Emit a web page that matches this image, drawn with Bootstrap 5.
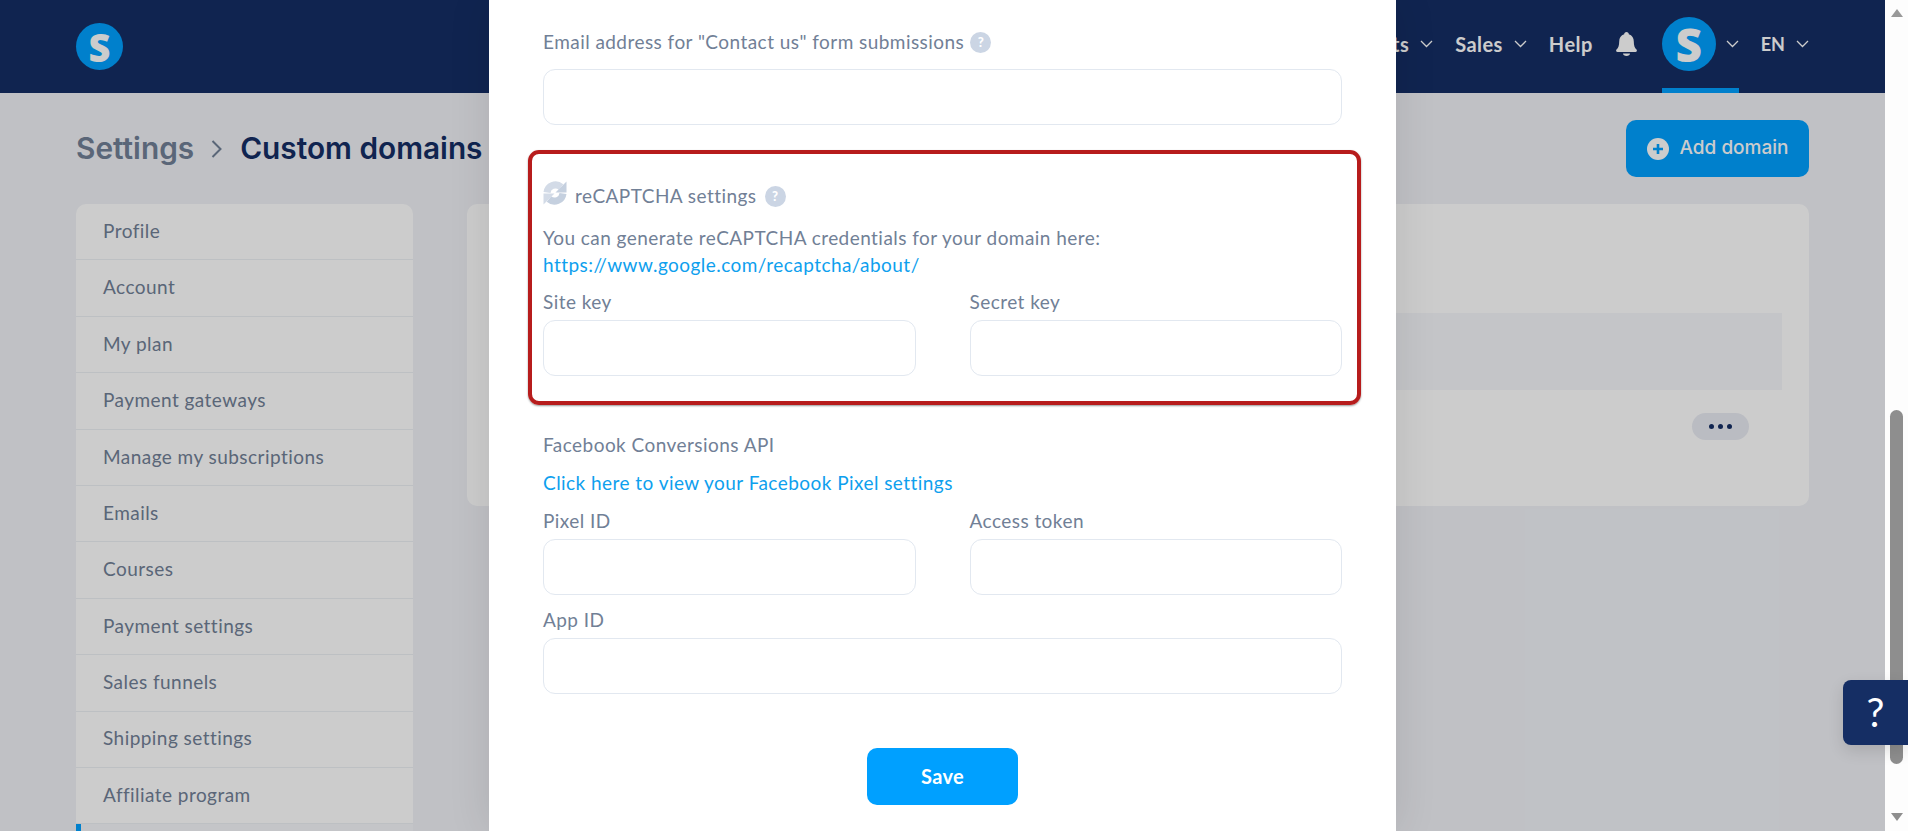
<!DOCTYPE html>
<html lang="en">
<head>
  <meta charset="UTF-8" />
  <meta name="viewport" content="width=device-width, initial-scale=1" />
  <title>Custom domains</title>
  <link href="https://cdn.jsdelivr.net/npm/bootstrap@5.3.3/dist/css/bootstrap.min.css" rel="stylesheet" />
  <style>
    html, body { height: 831px; overflow: hidden; }
    body { font-family: "Lato", sans-serif; font-size: 19px; letter-spacing: .45px; color: #718096; background: #fdfdfd; }
    .app-shell { height: 831px; }
    .app-main { position: relative; flex: 1 1 auto; min-width: 0; overflow: hidden; background: #f0f2f7; }

    /* top bar */
    .top-bar { height: 93px; padding: 0 76px; background: #152e64; color: #fff; font-weight: 700; font-size: 20px; }
    .logo-dot { width: 47px; height: 47px; font-size: 38px; }
    .round-s { border-radius: 50%; background: #00a0ff; color: #fff; font-family: "Open Sans", sans-serif; font-weight: 800; line-height: 1; letter-spacing: 0; }
    .top-link { color: #fff; text-decoration: none; display: flex; align-items: center; gap: 11px; }
    .lang-link { font-size: 18px; letter-spacing: 0; }
    .top-menu { gap: 22px; height: 93px; padding-bottom: 5px; }
    .avatar-wrap { position: relative; align-self: flex-start; height: 93px; width: 77px; padding-bottom: 5px; display: flex; align-items: center; gap: 10px; margin-left: 2px; }
    .avatar-wrap::after { content: ""; position: absolute; left: 0; right: 0; bottom: 0; height: 5px; background: #00a0ff; }
    .avatar-dot { width: 54px; height: 54px; font-size: 46px; flex: none; }
    .chev { width: 13px; height: 8px; flex: none; }

    /* page under the modal */
    .page-head { padding: 27px 76px 0 76px; height: 111px; }
    .crumbs { font-family: "Inter", sans-serif; font-weight: 600; font-size: 29.800px; letter-spacing: 0; margin: 0; padding-top: 11px; gap: 17px; color: #718096; }
    .crumbs b { color: #152e64; font-weight: 600; }
    .add-btn { width: 183px; height: 57px; border: 0; border-radius: 10px; background: #00a0ff; color: #fff; font-family: "Inter", sans-serif; font-weight: 500; font-size: 19px; letter-spacing: 0; gap: 11px; }
    .page-body { padding: 0 76px; gap: 54px; }
    .side-list { width: 337px; flex: none; border-radius: 10px; overflow: hidden; }
    .side-list .list-group-item { height: 56.4px; padding: 0 0 1px 27px; display: flex; align-items: center; background: #fff; border: 0; border-bottom: 1px solid #edf0f4; color: #718096; border-radius: 0; margin: 0; }
    .side-list .list-group-item.is-current { background: #f6f7fa; box-shadow: inset 5px 0 0 #00a0ff; }
    .domain-panel { flex: 1 1 auto; height: 302px; background: #fff; border-radius: 10px; padding: 109px 27px 0 27px; }
    .head-strip { height: 77px; background: #f6f7fa; }
    .dots-btn { width: 57px; height: 27px; margin: 23px 33px 0 auto; border: 0; border-radius: 14px; background: #e9ecf3; gap: 4px; }
    .dots-btn i { width: 5px; height: 5px; border-radius: 50%; background: #152e64; display: block; }

    .dim-layer { position: absolute; inset: 0; background: rgba(0, 0, 0, .2); }

    /* modal */
    .form-modal { position: absolute; top: 0; bottom: 0; left: 489px; width: 907px; padding: 30px 54px 0; background: #fff; box-shadow: 0 0 40px rgba(0, 0, 0, .1); overflow: hidden; }
    .form-modal label, .modal-line { display: block; line-height: 24px; margin: 0; }
    .modal-line.with-tip { display: flex; align-items: center; gap: 6px; }
    .tip-dot { width: 21px; height: 21px; border-radius: 50%; background: #cbd5e4; color: #fff; font-size: 13px; font-weight: 900; line-height: 21px; letter-spacing: 0; text-align: center; flex: none; }
    .form-modal .form-control { height: 56px; border: 1px solid #e2e8f0; border-radius: 12px; margin-top: 6px; box-shadow: none; }
    .form-modal .first-field { margin-top: 15px; }
    .key-row { --bs-gutter-x: 54px; }
    .red-box { margin: 25px -19px 0 -15px; padding: 27px 15px 25px 11px; border: 4px solid #b71c1c; border-radius: 11px; box-shadow: 0 1px 2px rgba(0, 0, 0, .4); }
    .captcha-head { height: 30px; gap: 8px; margin-bottom: 13px; }
    .captcha-icon { align-self: flex-start; flex: none; }
    .captcha-text { line-height: 27px; margin: 0; }
    .form-modal a { color: #0ea0ee; text-decoration: none; }
    .gap-a { margin-top: 12px; }
    .form-modal .gap-b { margin-top: 28px; }
    .fb-link { line-height: 26px; margin-top: 13px; display: block; }
    .gap-c { margin-top: 13px; }
    .form-modal .gap-d { margin-top: 13px; }
    .save-btn { display: block; width: 151px; height: 57px; margin: 54px auto 0; padding-bottom: 3px; border: 0; border-radius: 10px; background: #00a0ff; color: #fff; font-weight: 700; font-size: 20px; letter-spacing: .3px; }

    /* help tab over the scrollbar */
    .help-tab { position: absolute; left: 1843px; top: 680px; width: 65px; height: 65px; background: #152e64; border-radius: 8px 0 0 8px; color: #fff; font-size: 40px; line-height: 65px; letter-spacing: 0; text-align: center; box-shadow: 0 6px 16px rgba(0, 0, 0, .12); }

    /* scrollbar */
    .fake-scroll { position: relative; width: 23px; flex: none; background: #fdfdfd; }
    .fake-thumb { position: absolute; left: 5px; top: 410px; width: 13px; height: 354px; background: #8e8e8e; border-radius: 7px; }
    .fake-arrow { position: absolute; left: 6px; width: 0; height: 0; border-left: 6px solid transparent; border-right: 6px solid transparent; }
    .fake-arrow.up { top: 9px; border-bottom: 8px solid #999; }
    .fake-arrow.down { top: 813px; border-top: 8px solid #8e8e8e; }
  </style>
</head>
<body>
  <div class="app-shell d-flex position-relative">
    <div class="app-main">
      <header class="top-bar d-flex align-items-center justify-content-between">
        <div class="logo-dot round-s d-flex align-items-center justify-content-center">S</div>
        <nav class="top-menu d-flex align-items-center">
          <a class="top-link" href="#">Products <svg class="chev" viewBox="0 0 13 8"><path d="M1 1l5.500 5.500L12 1" fill="none" stroke="#fff" stroke-width="1.300"/></svg></a>
          <a class="top-link" href="#">Sales <svg class="chev" viewBox="0 0 13 8"><path d="M1 1l5.500 5.500L12 1" fill="none" stroke="#fff" stroke-width="1.300"/></svg></a>
          <a class="top-link" href="#">Help</a>
          <svg width="23" height="24" viewBox="0 0 23 24"><path d="M11.500 0c1.400 0 2.300 1 2.300 2.200 3.300 1 5 3.700 5 7.300 0 4.300.9 6.300 2.700 8 .8.800.4 2.500-1 2.500H2.500c-1.400 0-1.800-1.700-1-2.500 1.800-1.700 2.700-3.700 2.700-8 0-3.600 1.700-6.300 5-7.300C9.200 1 10.100 0 11.500 0z" fill="#fff"/><path d="M8 21.500h7c0 1.500-1.500 2.500-3.500 2.500S8 23 8 21.500z" fill="#fff"/></svg>
          <div class="avatar-wrap">
            <div class="avatar-dot round-s d-flex align-items-center justify-content-center">S</div>
            <svg class="chev" viewBox="0 0 13 8"><path d="M1 1l5.500 5.500L12 1" fill="none" stroke="#fff" stroke-width="1.300"/></svg>
          </div>
          <a class="top-link lang-link" href="#">EN <svg class="chev" viewBox="0 0 13 8"><path d="M1 1l5.500 5.500L12 1" fill="none" stroke="#fff" stroke-width="1.300"/></svg></a>
        </nav>
      </header>

      <div class="page-head d-flex align-items-start justify-content-between">
        <h1 class="crumbs d-flex align-items-center">Settings
          <svg width="12" height="20" viewBox="0 0 12 20"><path d="M1.500 2l8 8-8 8" fill="none" stroke="#718096" stroke-width="2"/></svg>
          <b>Custom domains</b></h1>
        <button class="add-btn d-flex align-items-center justify-content-center" type="button">
          <svg width="22" height="22" viewBox="0 0 22 22"><circle cx="11" cy="11" r="11" fill="#fff"/><path d="M11 6v10M6 11h10" stroke="#00a0ff" stroke-width="2.600"/></svg>
          Add domain
        </button>
      </div>

      <div class="page-body d-flex align-items-start">
        <div class="side-list list-group">
          <a class="list-group-item" href="#">Profile</a>
          <a class="list-group-item" href="#">Account</a>
          <a class="list-group-item" href="#">My plan</a>
          <a class="list-group-item" href="#">Payment gateways</a>
          <a class="list-group-item" href="#">Manage my subscriptions</a>
          <a class="list-group-item" href="#">Emails</a>
          <a class="list-group-item" href="#">Courses</a>
          <a class="list-group-item" href="#">Payment settings</a>
          <a class="list-group-item" href="#">Sales funnels</a>
          <a class="list-group-item" href="#">Shipping settings</a>
          <a class="list-group-item" href="#">Affiliate program</a>
          <a class="list-group-item is-current" href="#" aria-label="Custom domains"></a>
        </div>
        <div class="domain-panel">
          <div class="head-strip"></div>
          <button class="dots-btn d-flex align-items-center justify-content-center" type="button"><i></i><i></i><i></i></button>
        </div>
      </div>

      <div class="dim-layer"></div>

      <div class="form-modal">
        <div class="modal-line with-tip">Email address for "Contact us" form submissions <span class="tip-dot">?</span></div>
        <input class="form-control first-field" type="text" />

        <div class="red-box">
          <div class="captcha-head d-flex align-items-center">
            <svg class="captcha-icon" width="24" height="24" viewBox="0 0 24 24">
              <path d="M4 11.500A8.500 8.500 0 0 1 18 6" fill="none" stroke="#d3dbe7" stroke-width="7"/>
              <path d="M23.500 .5V11.500H12.500z" fill="#c5d0df"/>
              <path d="M20 12.500A8.500 8.500 0 0 1 6 18" fill="none" stroke="#c5d0df" stroke-width="7"/>
              <path d="M.5 23.500V12.500H11.500z" fill="#d3dbe7"/>
            </svg>
            <span>reCAPTCHA settings</span>
            <span class="tip-dot">?</span>
          </div>
          <p class="captcha-text">You can generate reCAPTCHA credentials for your domain here:<br><a href="#">https://www.google.com/recaptcha/about/</a></p>
          <div class="row key-row gap-a">
            <div class="col-6"><label>Site key</label><input class="form-control" type="text" /></div>
            <div class="col-6"><label>Secret key</label><input class="form-control" type="text" /></div>
          </div>
        </div>

        <div class="modal-line gap-b">Facebook Conversions API</div>
        <a class="fb-link" href="#">Click here to view your Facebook Pixel settings</a>
        <div class="row key-row gap-c">
          <div class="col-6"><label>Pixel ID</label><input class="form-control" type="text" /></div>
          <div class="col-6"><label>Access token</label><input class="form-control" type="text" /></div>
        </div>
        <label class="gap-d">App ID</label>
        <input class="form-control" type="text" />
        <button class="save-btn" type="button">Save</button>
      </div>
    </div>

    <div class="fake-scroll">
      <span class="fake-arrow up"></span>
      <span class="fake-thumb"></span>
      <span class="fake-arrow down"></span>
    </div>
    <div class="help-tab">?</div>
  </div>

  <script src="https://cdn.jsdelivr.net/npm/bootstrap@5.3.3/dist/js/bootstrap.bundle.min.js"></script>
</body>
</html>
